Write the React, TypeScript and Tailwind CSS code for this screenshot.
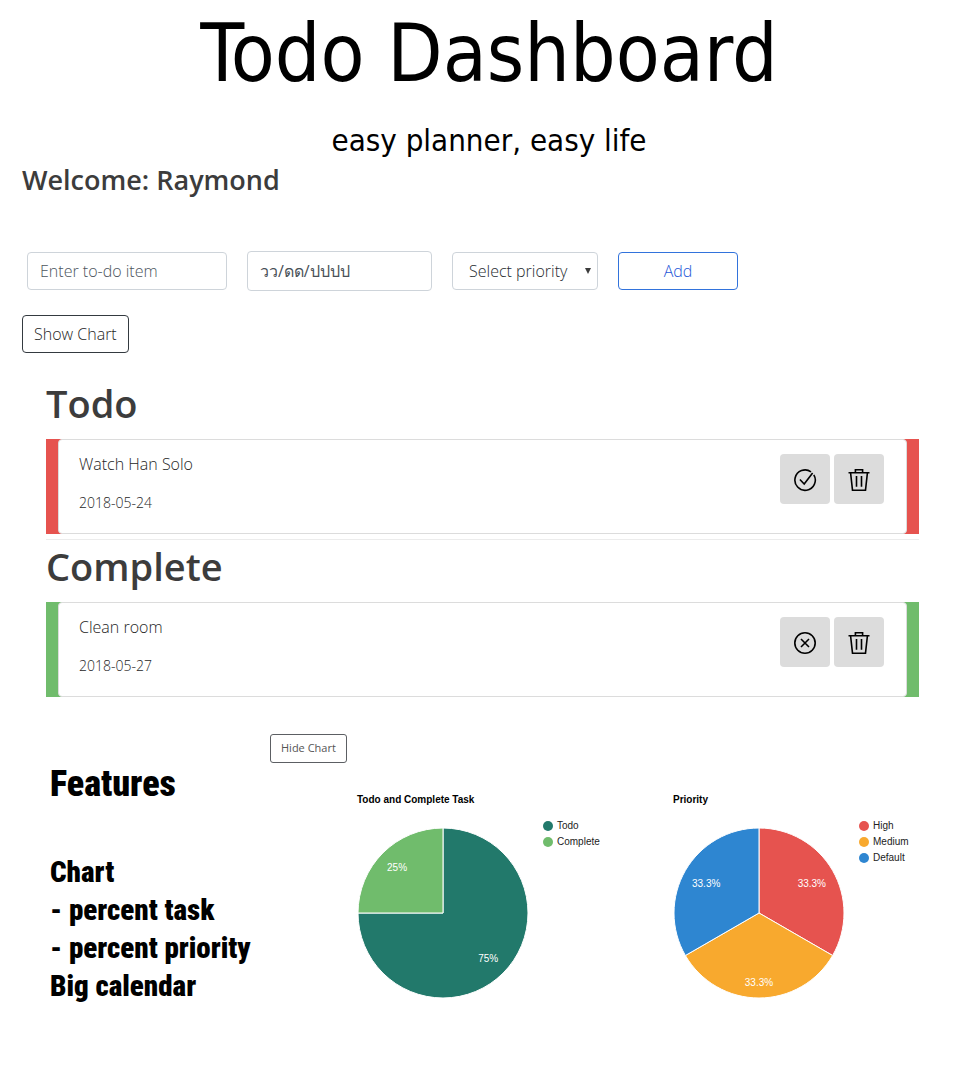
import { useState } from "react";
import type { ReactNode } from "react";

type Slice = {
  label: string;
  value: number;
  text: string;
  color: string;
  labelRadius: number;
};

const TASKS: Slice[] = [
  { label: "Todo", value: 75, text: "75%", color: "#22796b", labelRadius: 64 },
  { label: "Complete", value: 25, text: "25%", color: "#70bc6c", labelRadius: 65 },
];

const PRIORITIES: Slice[] = [
  { label: "High", value: 1, text: "33.3%", color: "#e6534f", labelRadius: 61 },
  { label: "Medium", value: 1, text: "33.3%", color: "#f8a92e", labelRadius: 69 },
  { label: "Default", value: 1, text: "33.3%", color: "#2e86d1", labelRadius: 61 },
];

function Icon({ children }: { children: ReactNode }) {
  return (
    <svg
      className="size-6"
      viewBox="0 0 24 24"
      fill="none"
      stroke="#000"
      strokeWidth="1.6"
      aria-hidden="true"
    >
      {children}
    </svg>
  );
}

const CheckIcon = () => (
  <Icon>
    <path d="M6.9 11.5 11.2 16 19.6 4.9" />
    <path d="M20.8 6.8A10.2 10.2 0 1 1 18 3.8" />
  </Icon>
);

const CrossIcon = () => (
  <Icon>
    <circle cx="12" cy="12" r="10.2" />
    <path d="M8 8 16 16M16 8 8 16" />
  </Icon>
);

const TrashIcon = () => (
  <Icon>
    <path d="M1.5 4.7H22.5M8.4 4.5V1.8H15.6V4.5M3.6 5 5.5 22.2H18.5L20.4 5M9.5 8V18.8M14.5 8V18.8" />
  </Icon>
);

function IconButton({ label, children }: { label: string; children: ReactNode }) {
  return (
    <button
      type="button"
      aria-label={label}
      className="flex size-[50px] items-center justify-center rounded bg-[#dcdcdc] pt-0.5"
    >
      {children}
    </button>
  );
}

function TaskCard({
  title,
  date,
  done,
}: {
  title: string;
  date: string;
  done?: boolean;
}) {
  return (
    <li className={done ? "bg-[#70bc6c] px-3" : "bg-[#e6534f] px-3"}>
      <div className="flex items-start justify-between rounded border border-[#dcdcdc] bg-white pt-3.5 pr-[22px] pb-[19px] pl-5">
        <div className="text-[#262626]">
          <p className="text-base leading-5 font-light">{title}</p>
          <p className="mt-[18px] text-sm leading-[22px] font-light">{date}</p>
        </div>
        <div className="flex gap-1">
          <IconButton label={done ? "Mark as not done" : "Mark as done"}>
            {done ? <CrossIcon /> : <CheckIcon />}
          </IconButton>
          <IconButton label="Delete">
            <TrashIcon />
          </IconButton>
        </div>
      </div>
    </li>
  );
}

function PieChart({ title, slices }: { title: string; slices: Slice[] }) {
  const total = slices.reduce((sum, s) => sum + s.value, 0);
  const point = (turn: number, r: number) => {
    const a = turn * 2 * Math.PI;
    return [85 + r * Math.sin(a), 85 - r * Math.cos(a)];
  };
  let start = 0;
  return (
    <figure className="font-['Liberation_Sans',sans-serif]">
      <figcaption className="text-[10px] leading-4 font-bold text-black">{title}</figcaption>
      <div className="mt-2.5 flex gap-[15px] pl-px">
        <svg className="mt-2.5 size-[170px] overflow-visible" viewBox="0 0 170 170" role="img" aria-label={title}>
          {slices.map((s) => {
            const from = start / total;
            start += s.value;
            const to = start / total;
            const [x1, y1] = point(from, 85);
            const [x2, y2] = point(to, 85);
            const [tx, ty] = point((from + to) / 2, s.labelRadius);
            return (
              <g key={s.label}>
                <path
                  d={`M85 85L${x1} ${y1}A85 85 0 ${to - from > 0.5 ? 1 : 0} 1 ${x2} ${y2}Z`}
                  fill={s.color}
                  stroke="#fff"
                  strokeWidth="1"
                />
                <text x={tx} y={ty + 4} textAnchor="middle" fontSize="10" fill="#fff">
                  {s.text}
                </text>
              </g>
            );
          })}
        </svg>
        <ul>
          {slices.map((s) => (
            <li key={s.label} className="flex items-center gap-1 text-[10px] leading-4 text-[#222]">
              <svg className="size-2.5" viewBox="0 0 10 10" aria-hidden="true">
                <circle cx="5" cy="5" r="5" fill={s.color} />
              </svg>
              {s.label}
            </li>
          ))}
        </ul>
      </div>
    </figure>
  );
}

export default function App() {
  const [item, setItem] = useState("");
  const [date, setDate] = useState("");
  return (
    <div className="bg-white font-['Open_Sans','Noto_Sans',sans-serif] text-[#3c3c3c]">
      <header className="pl-4 text-center font-['DejaVu_Sans_Condensed','DejaVu_Sans',sans-serif] text-black">
        <h1 className="text-[80px] leading-[108px]">Todo Dashboard</h1>
        <p className="pt-3 text-[31px] leading-10">easy planner, easy life</p>
      </header>

      <main>
        <section className="px-[22px]">
          <h2 className="text-[27px] leading-10 font-semibold">Welcome: Raymond</h2>
          <form
            className="mt-[51px] flex flex-wrap items-center gap-5 pl-[5px] text-base font-light"
            onSubmit={(e) => e.preventDefault()}
          >
            <input
              aria-label="To-do item"
              placeholder="Enter to-do item"
              value={item}
              onChange={(e) => setItem(e.target.value)}
              className="h-[38px] w-[200px] rounded border border-[#ced4da] px-3 placeholder:text-[#4c555d]"
            />
            <input
              aria-label="Date"
              placeholder="วว/ดด/ปปปป"
              value={date}
              onChange={(e) => setDate(e.target.value)}
              className="h-10 w-[185px] rounded border border-[#ced4da] px-3 font-normal placeholder:text-[#495057]"
            />
            <div className="relative">
              <select
                aria-label="Priority"
                className="h-[38px] w-[146px] appearance-none rounded border border-[#ced4da] bg-white pl-4 text-[#262b30]"
              >
                <option>Select priority</option>
                <option>High</option>
                <option>Medium</option>
                <option>Default</option>
              </select>
              <svg className="pointer-events-none absolute top-4 right-1.5 h-1.5 w-2" viewBox="0 0 8 6" aria-hidden="true">
                <path d="M1 0H7L4 6Z" fill="#3c3c3c" />
              </svg>
            </div>
            <button type="submit" className="h-[38px] w-[120px] rounded border border-[#3273dc] text-[#2457d8]">
              Add
            </button>
          </form>
          <button
            type="button"
            className="mt-6 h-[38px] rounded border border-[#343a40] px-[11px] text-base font-light text-[#262626]"
          >
            Show Chart
          </button>
        </section>

        <section className="pt-[26px] pr-[43px] pl-[46px]">
          <h2 className="text-[38px] leading-[48px] font-semibold">Todo</h2>
          <ul className="mt-3">
            <TaskCard title="Watch Han Solo" date="2018-05-24" />
          </ul>
          <hr className="mt-[5px] border-[#ececec]" />
          <h2 className="mt-0.5 text-[38px] leading-[48px] font-semibold">Complete</h2>
          <ul className="mt-3">
            <TaskCard title="Clean room" date="2018-05-27" done />
          </ul>
        </section>

        <section className="flex pt-[37px] pb-16 pl-[50px]">
          <div className="w-[220px] shrink-0 pt-[26px] font-['Roboto_Condensed','Liberation_Sans_Narrow','DejaVu_Sans_Condensed',sans-serif] font-black whitespace-nowrap text-black">
            <h2 className="text-4xl leading-[48px]">Features</h2>
            <div className="mt-[45px] text-[29px] leading-[38px]">
              <h3>Chart</h3>
              <p>- percent task</p>
              <p>- percent priority</p>
              <p>Big calendar</p>
            </div>
          </div>
          <div>
            <button
              type="button"
              className="h-[29px] rounded-[3px] border border-[#5c5f63] px-2.5 text-[11px] text-[#555]"
            >
              Hide Chart
            </button>
            <div className="flex pt-[29px] pl-[87px]">
              <div className="w-[316px]">
                <PieChart title="Todo and Complete Task" slices={TASKS} />
              </div>
              <PieChart title="Priority" slices={PRIORITIES} />
            </div>
          </div>
        </section>
      </main>
    </div>
  );
}
